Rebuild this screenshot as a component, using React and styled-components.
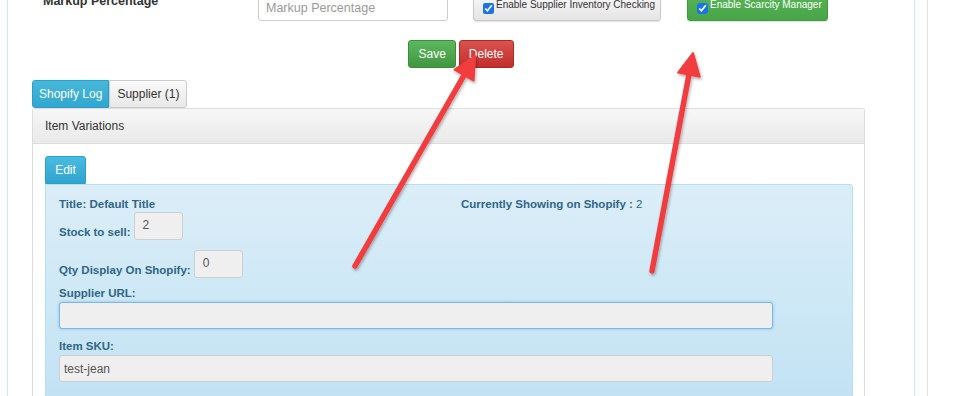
import React from 'react'
import styled, { createGlobalStyle } from 'styled-components'

const Global = createGlobalStyle`
  html, body {
    margin: 0;
    padding: 0;
    background: #fff;
  }
  body {
    font-family: "Liberation Sans", Arial, sans-serif;
    color: #333;
  }
`

const Page = styled.div`
  position: relative;
  width: 962px;
  height: 396px;
  overflow: hidden;
  display: flex;
  background: #fff;
`

const Frame = styled.div`
  margin-left: 7px;
  width: 906px;
  border-left: 1px solid #cfe8f3;
  border-right: 1px solid #cfe8f3;
`

const Rail = styled.div`
  margin-left: 12px;
  width: 30px;
  border-left: 1px solid #e4e4e4;
`

const TopRow = styled.div`
  display: flex;
  align-items: flex-end;
  margin-top: -15px;
  padding-left: 35px;
`

const FieldLabel = styled.div`
  width: 215px;
  font-size: 12.5px;
  font-weight: bold;
  color: #333;
  align-self: flex-start;
  padding-top: 9px;
`

const TextInput = styled.input`
  box-sizing: border-box;
  width: 190px;
  height: 34px;
  padding: 7px 7px 0;
  border: 1px solid #ccc;
  border-radius: 3px;
  font-family: inherit;
  font-size: 12.5px;
  color: #555;
  box-shadow: inset 0 1px 1px rgba(0, 0, 0, 0.06);
  &::placeholder {
    color: #9a9a9a;
  }
`

const ToggleButton = styled.label`
  box-sizing: border-box;
  display: flex;
  align-items: flex-start;
  gap: 2px;
  width: ${p => p.$w}px;
  height: 36px;
  margin-left: ${p => p.$ml}px;
  padding: 13px 9px 0;
  border: 1px solid ${p => (p.$green ? '#3d9a3d' : '#c9c9c9')};
  border-radius: 3px;
  font-size: 10px;
  white-space: nowrap;
  color: ${p => (p.$green ? '#fff' : '#333')};
  background: ${p =>
    p.$green
      ? 'linear-gradient(#5cb85c, #47a447)'
      : 'linear-gradient(#ffffff, #e4e4e4)'};
  box-shadow: 0 1px 1px rgba(0, 0, 0, 0.12);
  input {
    margin: 4px 0 0;
    width: 11px;
    height: 11px;
    accent-color: #1a73e8;
  }
`

const Actions = styled.div`
  display: flex;
  justify-content: center;
  gap: 3px;
  margin-top: 19px;
`

const Btn = styled.button`
  height: 28px;
  padding: 0 ${p => p.$px || 10}px;
  border-radius: 3px;
  font-family: inherit;
  font-size: 12px;
  color: #fff;
  border: 1px solid ${p => (p.$danger ? '#ac2925' : '#3d8b3d')};
  background: ${p =>
    p.$danger
      ? 'linear-gradient(#d9534f, #c12e2a)'
      : 'linear-gradient(#5cb85c, #419641)'};
`

const Tabs = styled.div`
  display: flex;
  margin: 12px 0 0 24px;
`

const Tab = styled.div`
  box-sizing: border-box;
  height: 28px;
  display: flex;
  align-items: center;
  padding: 0 ${p => p.$px}px;
  font-size: 12px;
  border: 1px solid ${p => (p.$active ? '#2a9fc9' : '#ccc')};
  border-radius: ${p => (p.$active ? '3px 0 0 3px' : '0 3px 3px 0')};
  color: ${p => (p.$active ? '#fff' : '#333')};
  background: ${p =>
    p.$active
      ? 'linear-gradient(#46b8da, #31a6d0)'
      : 'linear-gradient(#fafafa, #e8e8e8)'};
`

const Panel = styled.div`
  margin-left: 24px;
  width: 833px;
  height: 300px;
  box-sizing: border-box;
  border: 1px solid #ddd;
  border-bottom: none;
  border-radius: 3px 3px 0 0;
`

const PanelHeader = styled.div`
  height: 34px;
  display: flex;
  align-items: center;
  padding-left: 12px;
  font-size: 12px;
  color: #333;
  background: linear-gradient(#f7f7f7, #e9e9e9);
  border-bottom: 1px solid #ddd;
`

const PanelBody = styled.div`
  padding: 12px 12px 0;
`

const EditTab = styled.div`
  box-sizing: border-box;
  width: 41px;
  height: 28px;
  display: flex;
  align-items: center;
  justify-content: center;
  font-size: 12px;
  color: #fff;
  border-radius: 3px 3px 0 0;
  background: linear-gradient(#4bbbe0, #2fa4cf);
  border: 1px solid #2a9fc9;
`

const InfoBox = styled.div`
  box-sizing: border-box;
  width: 808px;
  height: 240px;
  padding: 13px 13px 0;
  border: 1px solid #b6dff0;
  border-radius: 0 3px 0 0;
  background: linear-gradient(#dbeef8, #bfe1f3);
  color: #2f6688;
  font-size: 11.5px;
`

const Columns = styled.div`
  display: grid;
  grid-template-columns: 402px 1fr;
`

const Strong = styled.span`
  font-weight: bold;
`

const InlineField = styled.div`
  display: flex;
  align-items: flex-end;
  gap: 3px;
  margin-top: ${p => p.$mt}px;
`

const SmallInput = styled.input`
  box-sizing: border-box;
  width: 49px;
  height: 28px;
  padding: 0 8px 3px;
  border: 1px solid #cfcfcf;
  border-radius: 3px;
  background: #efefef;
  font-family: inherit;
  font-size: 12px;
  color: #555;
`

const InlineLabel = styled.span`
  font-weight: bold;
  padding-bottom: 2px;
`

const BlockLabel = styled.div`
  font-weight: bold;
  margin-top: ${p => p.$mt}px;
`

const WideInput = styled.input`
  box-sizing: border-box;
  display: block;
  width: 714px;
  height: ${p => p.$h}px;
  margin-top: 3px;
  padding: 0 4px;
  border: 1px solid ${p => (p.$focus ? '#7ab8e8' : '#cfcfcf')};
  border-radius: 3px;
  background: #efefef;
  font-family: inherit;
  font-size: 12px;
  color: #555;
  box-shadow: ${p => (p.$focus ? '0 0 3px rgba(90, 160, 230, 0.6)' : 'none')};
`

const Overlay = styled.svg`
  position: absolute;
  left: 0;
  top: 0;
  pointer-events: none;
`

function Arrow({ x1, y1, x2, y2 }) {
  const dx = x2 - x1
  const dy = y2 - y1
  const len = Math.hypot(dx, dy)
  const ux = dx / len
  const uy = dy / len
  const bx = x2 - ux * 22
  const by = y2 - uy * 22
  const px = -uy * 11
  const py = ux * 11
  return (
    <g filter="url(#shadow)">
      <line x1={x1} y1={y1} x2={bx + ux * 4} y2={by + uy * 4} stroke="#f23d3f" strokeWidth="5.5" strokeLinecap="round" />
      <polygon points={`${x2},${y2} ${bx + px},${by + py} ${bx - px},${by - py}`} fill="#f23d3f" stroke="#f23d3f" strokeWidth="2" strokeLinejoin="round" />
    </g>
  )
}

export default function App() {
  return (
    <Page>
      <Global />
      <Frame>
        <TopRow>
          <FieldLabel>Markup Percentage</FieldLabel>
          <TextInput placeholder="Markup Percentage" />
          <ToggleButton $w={188} $ml={25}>
            <input type="checkbox" defaultChecked />
            Enable Supplier Inventory Checking
          </ToggleButton>
          <ToggleButton $w={141} $ml={26} $green>
            <input type="checkbox" defaultChecked />
            Enable Scarcity Manager
          </ToggleButton>
        </TopRow>
        <Actions>
          <Btn $px={9}>Save</Btn>
          <Btn $danger $px={9}>Delete</Btn>
        </Actions>
        <Tabs>
          <Tab $active $px={6}>Shopify Log</Tab>
          <Tab $px={7}>Supplier (1)</Tab>
        </Tabs>
        <Panel>
          <PanelHeader>Item Variations</PanelHeader>
          <PanelBody>
            <EditTab>Edit</EditTab>
            <InfoBox>
              <Columns>
                <div>
                  <Strong>Title: Default Title</Strong>
                </div>
                <div>
                  <Strong>Currently Showing on Shopify :</Strong> 2
                </div>
              </Columns>
              <InlineField $mt={2}>
                <InlineLabel>Stock to sell:</InlineLabel>
                <SmallInput defaultValue="2" />
              </InlineField>
              <InlineField $mt={10}>
                <InlineLabel>Qty Display On Shopify:</InlineLabel>
                <SmallInput defaultValue="0" />
              </InlineField>
              <BlockLabel $mt={9}>Supplier URL:</BlockLabel>
              <WideInput $focus $h={27} />
              <BlockLabel $mt={11}>Item SKU:</BlockLabel>
              <WideInput $h={27} defaultValue="test-jean" />
            </InfoBox>
          </PanelBody>
        </Panel>
      </Frame>
      <Rail />
      <Overlay width="962" height="396">
        <defs>
          <filter id="shadow" x="-20%" y="-20%" width="140%" height="140%">
            <feDropShadow dx="1" dy="2" stdDeviation="1.5" floodColor="#000" floodOpacity="0.3" />
          </filter>
        </defs>
        <Arrow x1={355} y1={266} x2={475} y2={56} />
        <Arrow x1={652} y1={271} x2={693} y2={53} />
      </Overlay>
    </Page>
  )
}
